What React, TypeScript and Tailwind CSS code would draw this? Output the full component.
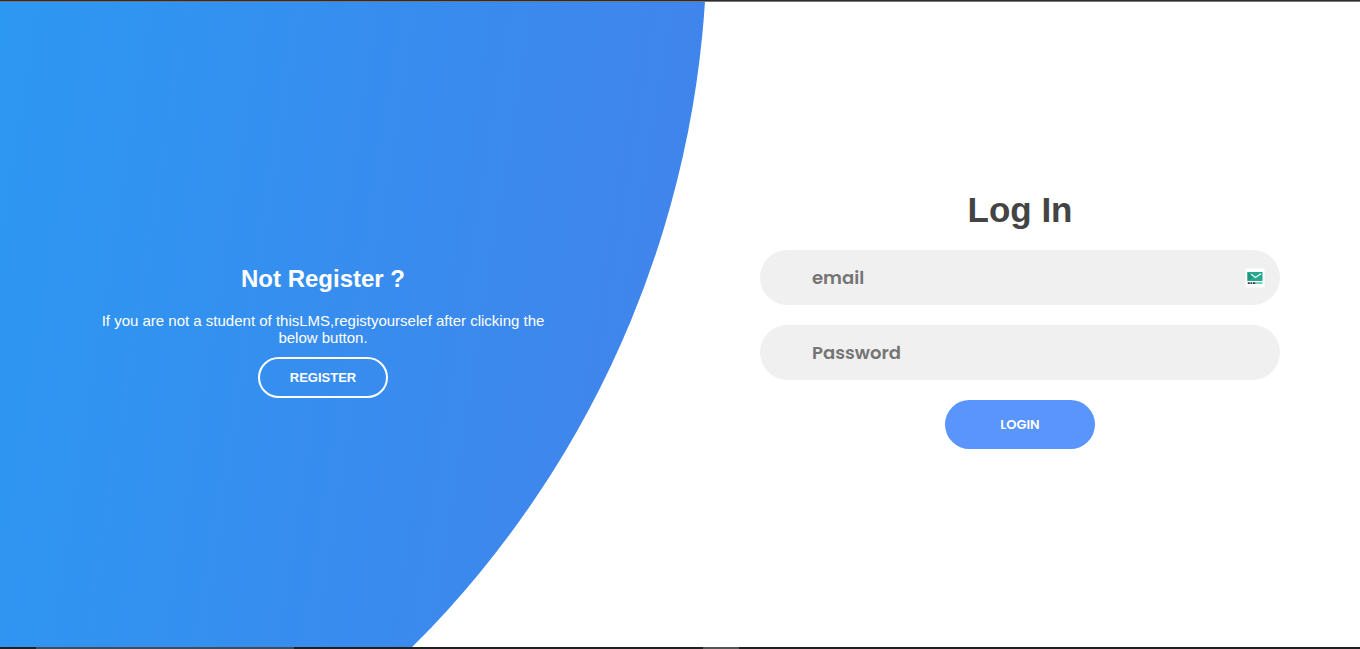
import { useState } from "react";

function MailBadge() {
  return (
    <svg viewBox="0 0 20 20" className="size-5" aria-hidden="true">
      <rect x="0.5" y="0.5" width="19" height="19" rx="1" fill="#fcfefe" />
      <rect x="2.5" y="4" width="15" height="9" fill="#2aa88f" />
      <path d="M2.5 4 L9 9 L2.5 13 Z" fill="#1f9580" />
      <path d="M6 6.3 L10.4 9.6 L16 5.8" fill="none" stroke="#e6fffa" strokeWidth="1.2" />
      <path d="M2.8 15.2h2M5.4 15.2h1.8M7.9 15.2h2.6" stroke="#263f42" strokeWidth="1.8" />
      <path d="M11 15h6.5" stroke="#68cbb9" strokeWidth="1.8" />
    </svg>
  );
}

const fieldClass =
  "h-[55px] w-full rounded-full bg-[#f0f0f0] pl-[52px] pr-14 font-['Poppins',Inter,sans-serif] text-lg font-semibold text-[#333] outline-none placeholder:text-[#757575]";

function LoginForm() {
  const [email, setEmail] = useState("");
  const [password, setPassword] = useState("");

  return (
    <form
      className="mb-[10px] flex w-full max-w-[520px] flex-col items-center gap-5"
      onSubmit={(event) => event.preventDefault()}
    >
      <h1 className="text-[35px] leading-10 font-bold text-[#444]">Log In</h1>
      <div className="relative w-full">
        <input
          type="email"
          aria-label="email"
          placeholder="email"
          value={email}
          onChange={(event) => setEmail(event.target.value)}
          className={fieldClass}
        />
        <span className="pointer-events-none absolute inset-y-0 right-[15px] flex items-center">
          <MailBadge />
        </span>
      </div>
      <input
        type="password"
        aria-label="Password"
        placeholder="Password"
        value={password}
        onChange={(event) => setPassword(event.target.value)}
        className={fieldClass}
      />
      <button
        type="submit"
        className="h-[49px] w-[150px] cursor-pointer rounded-full bg-[#5995fd] font-['Poppins',Inter,sans-serif] text-[13px] font-semibold text-white"
      >
        LOGIN
      </button>
    </form>
  );
}

function RegisterPanel() {
  return (
    <div className="mt-[14px] flex w-full max-w-[460px] flex-col items-center text-center text-white">
      <h2 className="text-2xl leading-7 font-bold">Not Register ?</h2>
      <p className="mt-[19px] text-[15px] leading-[17px]">
        If you are not a student of thisLMS,registyourselef after clicking the below button.
      </p>
      <button
        type="button"
        className="mt-[11px] h-[41px] w-[130px] cursor-pointer rounded-full border-2 border-white text-[13px] font-bold"
      >
        REGISTER
      </button>
    </div>
  );
}

export default function App() {
  return (
    <div className="flex min-h-screen flex-col bg-white font-['Liberation_Sans',Arial,sans-serif]">
      <div className="h-0.5 border-b border-[#777] bg-[#2b2c30]" />
      <main className="relative grid grow grid-cols-2 overflow-hidden">
        <div className="absolute top-[-10%] right-[48%] size-[2000px] -translate-y-1/2 rounded-full bg-[linear-gradient(-81deg,#4481eb_0%,#04befe_100%)]" />
        <section className="relative flex items-center justify-center pr-[5%]">
          <RegisterPanel />
        </section>
        <section className="relative flex items-center justify-center">
          <LoginForm />
        </section>
      </main>
      <div className="flex h-0.5 bg-[#202022]">
        <span className="ml-9 w-[258px] bg-[#3d4d5c]" />
        <span className="ml-[409px] w-9 bg-[#555]" />
      </div>
    </div>
  );
}
